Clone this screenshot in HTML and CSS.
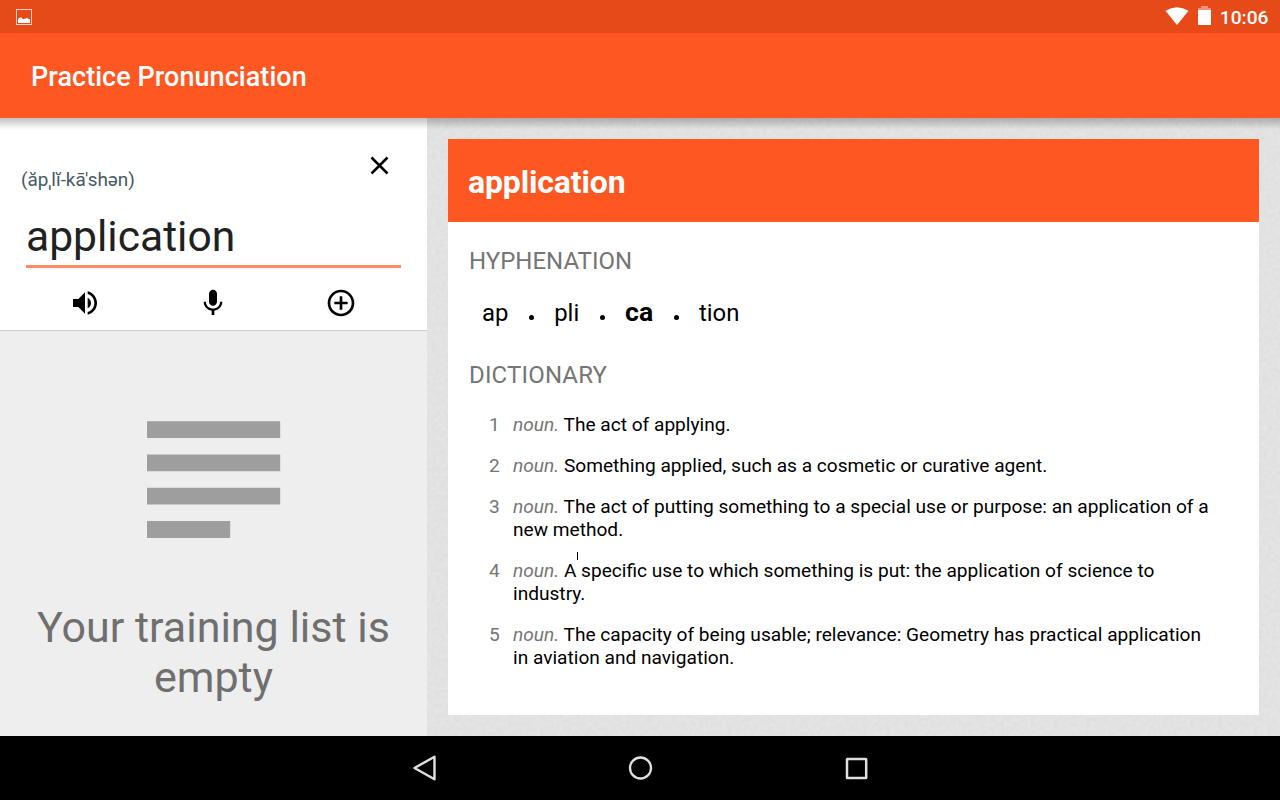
FILE: index.html
```html
<!DOCTYPE html>
<html lang="en">
<head>
<meta charset="utf-8">
<title>Practice Pronunciation</title>
<link rel="stylesheet" href="styles.css">
</head>
<body>
<div class="screen">
  <div class="status-bar">
    <svg class="status-picture" width="16" height="16" viewBox="0 0 16 16"><rect x=".5" y=".5" width="15" height="15" fill="none" stroke="#fff" stroke-opacity=".75"/><path d="M2 14v-4l3-2 2 2.500 1-.8 1.300 0 1.700-1 1.500 1.300 1.500.5V14z" fill="#fff"/></svg>
    <div class="status-right">
      <svg width="24" height="20" viewBox="0 0 24 20"><path d="M.5 4.800Q12-2.500 23.500 4.800L12 19z" fill="#fff"/></svg>
      <svg width="13" height="19" viewBox="0 0 13 19"><path d="M3 0h7v2h3v2H0V2h3z" fill="#fff" opacity=".4"/><path d="M0 4h13v15H0z" fill="#fff"/></svg>
      <span class="clock">10:06</span>
    </div>
  </div>
  <header class="app-bar"><h1 class="app-title">Practice Pronunciation</h1></header>
  <div class="content">
    <aside class="side">
      <section class="entry">
        <div class="entry-top">
          <span class="phonetic">(ăpˌlĭ-kā'shən)</span>
          <svg class="close" width="20" height="20" viewBox="0 0 20 20"><path d="M1.500 2.500l16 16M17.500 2.500l-16 16" stroke="#000" stroke-width="2.500" fill="none"/></svg>
        </div>
        <div class="word-field"><span class="word">application</span></div>
        <div class="actions">
          <div class="action"><svg width="32" height="32" viewBox="0 0 24 24"><path d="M3 9v6h4l5 5V4L7 9H3zm13.500 3c0-1.770-1.020-3.290-2.500-4.030v8.050c1.480-.73 2.500-2.250 2.500-4.020zM14 3.230v2.060c2.890.86 5 3.540 5 6.710s-2.110 5.850-5 6.710v2.060c4.010-.91 7-4.490 7-8.770s-2.990-7.860-7-8.770z"/></svg></div>
          <div class="action"><svg width="32" height="32" viewBox="0 0 24 24"><path d="M12 14c1.660 0 2.990-1.340 2.990-3L15 5c0-1.660-1.340-3-3-3S9 3.340 9 5v6c0 1.660 1.340 3 3 3zm5.300-3c0 3-2.540 5.100-5.300 5.100S6.700 14 6.700 11H5c0 3.410 2.720 6.230 6 6.720V21h2v-3.280c3.280-.48 6-3.300 6-6.720h-1.700z"/></svg></div>
          <div class="action"><svg width="32" height="32" viewBox="0 0 24 24"><path d="M13 7h-2v4H7v2h4v4h2v-4h4v-2h-4V7zm-1-5C6.480 2 2 6.480 2 12s4.480 10 10 10 10-4.480 10-10S17.520 2 12 2zm0 18c-4.410 0-8-3.590-8-8s3.590-8 8-8 8 3.590 8 8-3.590 8-8 8z"/></svg></div>
        </div>
      </section>
      <section class="empty">
        <svg width="134" height="118" viewBox="0 0 134 118"><path d="M0 .2h133.200v16.800H0zM0 33.500h133.200v16.800H0zM0 66.800h133.200v16.800H0zM0 100.100h83.200v16.800H0z" fill="#9e9e9e"/></svg>
        <p class="empty-text">Your training list is empty</p>
      </section>
    </aside>
    <main class="detail">
      <svg class="paper" width="853" height="618"><filter id="grain" x="0" y="0" width="100%" height="100%" color-interpolation-filters="sRGB"><feTurbulence type="fractalNoise" baseFrequency=".22" numOctaves="3" seed="4"/><feColorMatrix values=".045 0 0 0 .864  .045 0 0 0 .864  .045 0 0 0 .864  0 0 0 0 1"/></filter><rect width="853" height="618" filter="url(#grain)"/></svg>
      <article class="card">
        <h2 class="card-head">application</h2>
        <div class="card-body">
          <h3 class="label">HYPHENATION</h3>
          <div class="syllables">
            <span class="syl">ap</span><i class="dot"></i><span class="syl">pli</span><i class="dot"></i><b class="syl stress">ca</b><i class="dot"></i><span class="syl">tion</span>
          </div>
          <h3 class="label label-dict">DICTIONARY</h3>
          <div class="defs">
            <div class="def"><span class="num">1</span><p class="sense"><em class="pos">noun.</em> The act of applying.</p></div>
            <div class="def"><span class="num">2</span><p class="sense"><em class="pos">noun.</em> Something applied, such as a cosmetic or curative agent.</p></div>
            <div class="def"><span class="num">3</span><p class="sense"><em class="pos">noun.</em> The act of putting something to a special use or purpose: an application of a<br>new method.</p></div>
            <div class="def"><span class="num">4</span><p class="sense"><em class="pos">noun.</em> A specific use to which something is put: the application of science to<br>industry.<i class="caret"></i></p></div>
            <div class="def"><span class="num">5</span><p class="sense"><em class="pos">noun.</em> The capacity of being usable; relevance: Geometry has practical application<br>in aviation and navigation.</p></div>
          </div>
        </div>
      </article>
    </main>
  </div>
  <nav class="nav-bar">
    <svg width="26" height="28" viewBox="0 0 26 28"><path d="M2.500 14L22.500 2.800V25.200z" fill="none" stroke="#e0e0e0" stroke-width="2.400" stroke-linejoin="round"/></svg>
    <svg width="26" height="28" viewBox="0 0 26 28"><circle cx="12.500" cy="14" r="10.500" fill="none" stroke="#e0e0e0" stroke-width="2.300"/></svg>
    <svg width="26" height="28" viewBox="0 0 26 28"><rect x="3" y="4.900" width="19.200" height="19.200" rx=".4" fill="none" stroke="#e0e0e0" stroke-width="2.500"/></svg>
  </nav>
</div>
</body>
</html>
```
FILE: styles.css
```css
* { box-sizing: border-box; }
body { margin: 0; font-family: Roboto, "Noto Sans", sans-serif; color: #000; }
h1, h2, h3, p { margin: 0; font-weight: 400; }
svg { display: block; flex: none; }
.screen { width: 1280px; height: 800px; display: flex; flex-direction: column; overflow: hidden; }
.status-bar { height: 33px; flex: none; background: #e64a19; display: flex; justify-content: space-between; padding: 0 11.500px 0 16px; }
.status-picture { margin-top: 9px; }
.status-right { display: flex; padding-top: 6px; color: #fff; }
.status-right svg + svg { margin-left: 8.500px; }
.clock { margin-left: 9px; font-size: 19.200px; font-weight: 500; line-height: 24px; }
.app-bar { height: 85px; flex: none; background: #ff5722; padding-left: 31px; color: #fff; position: relative; z-index: 2; }
.app-bar::after { content: ""; position: absolute; left: 0; right: 0; top: 85px; height: 12px; background: linear-gradient(rgba(0,0,0,.24), rgba(0,0,0,.14) 40%, rgba(0,0,0,.03) 80%, transparent); }
.app-title { font-size: 27px; font-weight: 500; line-height: 89px; letter-spacing: .05px; }
.content { height: 618px; flex: none; display: flex; }
.side { width: 427px; background: #eee; flex: none; }
.entry { height: 213px; background: #fff; border-bottom: 1px solid #ccc; }
.entry-top { height: 83px; padding: 37px 37px 0 21px; display: flex; justify-content: space-between; }
.phonetic { color: #455a64; font-size: 18.900px; line-height: 24px; padding-top: 13px; }
.word-field { height: 67px; width: 375px; margin-left: 26px; border-bottom: 3px solid #ff8a65; }
.word { font-size: 42.600px; line-height: 70px; color: #212121; }
.actions { display: flex; padding: 19px 22px 0 21px; }
.action { flex: 1; display: flex; justify-content: center; }
.empty { padding-top: 90px; display: flex; flex-direction: column; align-items: center; }
.empty-text { font-size: 43px; line-height: 50px; margin-top: 63px; width: 370px; text-align: center; color: #6f6f6f; }
.detail { width: 853px; padding: 21px; position: relative; background: #e2e2e2; }
.paper { position: absolute; left: 0; top: 0; }
.card { position: relative; height: 576px; width: 811px; background: #fff; }
.card-head { height: 83px; background: #ff5722; color: #fff; font-size: 32px; letter-spacing: -.15px; font-weight: 700; line-height: 86px; padding-left: 20px; }
.card-body { padding: 24px 21px 0; }
.label { font-size: 24px; line-height: 30px; color: #757575; }
.label-dict { letter-spacing: .16px; }
.syllables { display: flex; align-items: center; height: 84px; padding: 0 0 10px 13px; font-size: 23.900px; line-height: 28px; }
.dot { width: 5px; height: 5px; border-radius: 50%; background: #000; margin: 9px 20.400px 0; }
.stress { font-size: 26.600px; font-weight: 700; margin-top: -2px; }
.defs { padding: 23px 0 0 20px; font-size: 19.120px; line-height: 23px; }
.def { display: flex; margin-bottom: 18px; }
.num { width: 24px; color: #757575; flex: none; }
.sense { white-space: nowrap; position: relative; }
.pos { color: #757575; }
.caret { position: absolute; left: 64px; top: -7px; width: 1px; height: 8px; background: #000; }
.nav-bar { height: 64px; flex: none; background: #000; display: flex; justify-content: center; gap: 190px; padding: 18px 0 0 1px; }
```
